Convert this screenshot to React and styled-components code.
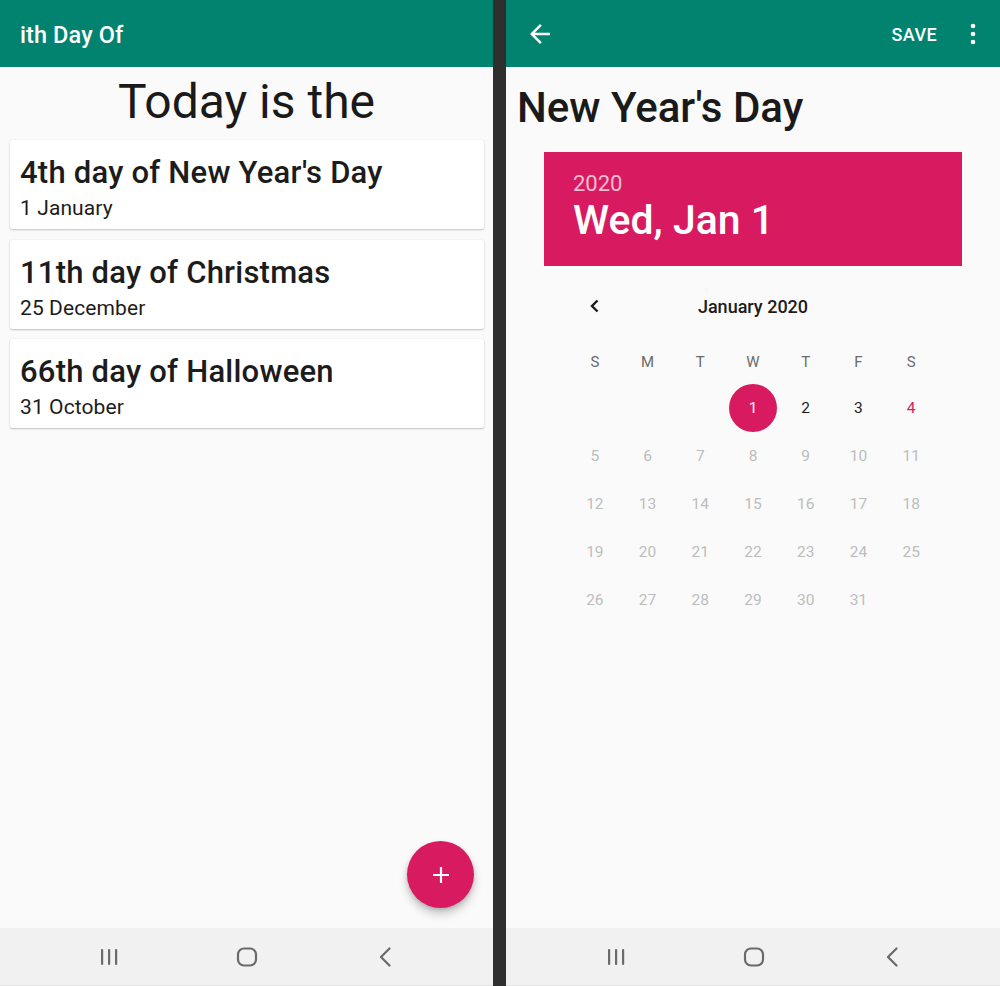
import React from 'react';
import styled, { createGlobalStyle } from 'styled-components';

const GlobalStyle = createGlobalStyle`
  html, body {
    margin: 0;
    padding: 0;
    background: #333;
  }
  body {
    font-family: Roboto, "Noto Sans", Arial, sans-serif;
    -webkit-font-smoothing: antialiased;
  }
  * {
    box-sizing: border-box;
  }
`;

const TEAL = '#01836f';
const PINK = '#d81b60';

const Screens = styled.div`
  display: flex;
  width: 1000px;
  height: 986px;
  background: #333;
`;

const Phone = styled.div`
  width: ${(p) => p.width}px;
  height: 986px;
  display: flex;
  flex-direction: column;
  background: #fafafa;
`;

const Divider = styled.div`
  width: 13px;
  background: #2f2f2f;
`;

const AppBar = styled.header`
  height: 67px;
  flex-shrink: 0;
  background: ${TEAL};
  color: #fff;
  display: flex;
  align-items: center;
  padding: ${(p) => p.pad || '0 20px'};
`;

const AppTitle = styled.h1`
  margin: 0;
  padding-top: 2px;
  font-size: 23.5px;
  font-weight: 500;
  letter-spacing: 0.1px;
`;

const IconButton = styled.button`
  border: none;
  background: none;
  padding: 0;
  color: #fff;
  display: flex;
  align-items: center;
  justify-content: center;
  width: ${(p) => p.size || 30}px;
  height: ${(p) => p.size || 30}px;
`;

const Spacer = styled.div`
  flex: 1;
`;

const SaveButton = styled.button`
  border: none;
  background: none;
  color: #fff;
  font-family: inherit;
  font-size: 18px;
  font-weight: 500;
  letter-spacing: 0.4px;
  padding: 0;
  margin-right: 20px;
  margin-top: 2px;
`;

const Content = styled.main`
  flex: 1;
  position: relative;
  display: flex;
  flex-direction: column;
`;

const Heading = styled.h2`
  margin: 7px 0 10px;
  text-align: center;
  font-size: 48px;
  font-weight: 400;
  color: #1a1a1a;
  line-height: 56px;
`;

const CardList = styled.div`
  display: flex;
  flex-direction: column;
  gap: 10.5px;
  padding: 0 9px 0 10px;
`;

const Card = styled.div`
  background: #fff;
  border-radius: 2px;
  box-shadow: 0 1px 2px rgba(0, 0, 0, 0.22), 0 0 1px rgba(0, 0, 0, 0.12);
  padding: 15px 10px 9px;
`;

const CardTitle = styled.div`
  font-size: 31px;
  font-weight: 500;
  letter-spacing: 0.22px;
  color: #1c1c1c;
  line-height: 35px;
`;

const CardSub = styled.div`
  margin-top: 6px;
  font-size: 21px;
  letter-spacing: 0.1px;
  color: #1c1c1c;
  line-height: 24px;
`;

const Fab = styled.button`
  position: absolute;
  right: 19px;
  bottom: 20px;
  width: 67px;
  height: 67px;
  border-radius: 50%;
  border: none;
  background: ${PINK};
  color: #fff;
  display: flex;
  align-items: center;
  justify-content: center;
  box-shadow: 0 6px 10px rgba(0, 0, 0, 0.2), 0 2px 4px rgba(0, 0, 0, 0.14);
`;

const NavBar = styled.nav`
  height: 58px;
  flex-shrink: 0;
  background: #f1f1f1;
  border-bottom: 1px solid #e2e2e2;
  display: grid;
  grid-template-columns: repeat(3, 138px);
  justify-content: center;
  align-items: center;
  justify-items: center;
  padding-left: ${(p) => p.shift || 0}px;
`;

const EventTitle = styled.h2`
  margin: 16px 0 20px 11px;
  font-size: 42px;
  font-weight: 500;
  color: #1a1a1a;
  line-height: 49px;
`;

const DateHeader = styled.div`
  margin: 0 38px;
  height: 114px;
  background: ${PINK};
  padding: 19px 29px 0;
  color: #fff;
`;

const YearText = styled.div`
  font-size: 22px;
  line-height: 26px;
  color: rgba(255, 255, 255, 0.72);
`;

const DateText = styled.div`
  font-size: 41px;
  font-weight: 500;
  line-height: 49px;
  margin-top: -1px;
`;

const Calendar = styled.div`
  width: 369px;
  margin: 16px auto 0;
`;

const MonthRow = styled.div`
  height: 48px;
  display: grid;
  grid-template-columns: 52.7px 1fr 52.7px;
  align-items: center;
`;

const MonthLabel = styled.div`
  text-align: center;
  font-size: 18px;
  font-weight: 500;
  color: #1c1c1c;
`;

const Arrow = styled.div`
  display: flex;
  justify-content: center;
  color: #1c1c1c;
`;

const WeekRow = styled.div`
  margin-top: 9px;
  height: 45px;
  display: grid;
  grid-template-columns: repeat(7, 1fr);
  align-items: center;
`;

const WeekDay = styled.div`
  text-align: center;
  font-size: 15px;
  color: #6b6b6b;
`;

const DayGrid = styled.div`
  display: grid;
  grid-template-columns: repeat(7, 1fr);
  grid-auto-rows: 48px;
`;

const Day = styled.div`
  display: flex;
  align-items: center;
  justify-content: center;
  font-size: 15.5px;
  color: ${(p) => (p.selected ? '#fff' : p.tone)};
  & > span {
    width: 48px;
    height: 48px;
    border-radius: 50%;
    display: flex;
    align-items: center;
    justify-content: center;
    background: ${(p) => (p.selected ? PINK : 'transparent')};
  }
`;

const holidays = [
  { title: "4th day of New Year's Day", date: '1 January' },
  { title: '11th day of Christmas', date: '25 December' },
  { title: '66th day of Halloween', date: '31 October' },
];

const weekDays = ['S', 'M', 'T', 'W', 'T', 'F', 'S'];

const RecentsIcon = () => (
  <svg width="20" height="18" viewBox="0 0 20 18" fill="#6a6a6a">
    <rect x="2" y="1" width="2.2" height="16" rx="1" />
    <rect x="9" y="1" width="2.2" height="16" rx="1" />
    <rect x="16" y="1" width="2.2" height="16" rx="1" />
  </svg>
);

const HomeIcon = () => (
  <svg width="22" height="20" viewBox="0 0 22 20" fill="none">
    <rect x="2" y="1.5" width="18" height="17" rx="6" stroke="#6a6a6a" strokeWidth="2.2" />
  </svg>
);

const BackIcon = () => (
  <svg width="14" height="20" viewBox="0 0 14 20" fill="none">
    <path d="M11.5 1.5L3 10l8.5 8.5" stroke="#6a6a6a" strokeWidth="2.2" strokeLinecap="round" strokeLinejoin="round" />
  </svg>
);

const SystemNav = ({ shift }) => (
  <NavBar shift={shift}>
    <RecentsIcon />
    <HomeIcon />
    <BackIcon />
  </NavBar>
);

const dayTone = (d) => {
  if (d === 4) return PINK;
  if (d <= 3) return '#1c1c1c';
  return '#bdbdbd';
};

const App = () => {
  // January 2020 starts on a Wednesday
  const cells = [null, null, null];
  for (let d = 1; d <= 31; d++) cells.push(d);

  return (
    <>
      <GlobalStyle />
      <Screens>
        <Phone width={493}>
          <AppBar>
            <AppTitle>ith Day Of</AppTitle>
          </AppBar>
          <Content>
            <Heading>Today is the</Heading>
            <CardList>
              {holidays.map((h) => (
                <Card key={h.title}>
                  <CardTitle>{h.title}</CardTitle>
                  <CardSub>{h.date}</CardSub>
                </Card>
              ))}
            </CardList>
            <Fab>
              <svg width="20" height="20" viewBox="0 0 20 20">
                <path d="M10 2v16M2 10h16" stroke="#fff" strokeWidth="2.2" />
              </svg>
            </Fab>
          </Content>
          <SystemNav shift={0} />
        </Phone>
        <Divider />
        <Phone width={494}>
          <AppBar pad="0 11px 0 19px">
            <IconButton size={30}>
              <svg width="30" height="30" viewBox="0 0 24 24" fill="#fff">
                <path d="M20 11H7.83l5.59-5.59L12 4l-8 8 8 8 1.41-1.41L7.83 13H20v-2z" />
              </svg>
            </IconButton>
            <Spacer />
            <SaveButton>SAVE</SaveButton>
            <IconButton size={32}>
              <svg width="32" height="32" viewBox="0 0 24 24" fill="#fff">
                <circle cx="12" cy="6" r="1.75" />
                <circle cx="12" cy="12" r="1.75" />
                <circle cx="12" cy="18" r="1.75" />
              </svg>
            </IconButton>
          </AppBar>
          <Content>
            <EventTitle>New Year's Day</EventTitle>
            <DateHeader>
              <YearText>2020</YearText>
              <DateText>Wed, Jan 1</DateText>
            </DateHeader>
            <Calendar>
              <MonthRow>
                <Arrow>
                  <svg width="12" height="14" viewBox="0 0 12 14" fill="none">
                    <path d="M8.5 1.5L3 7l5.5 5.5" stroke="#1c1c1c" strokeWidth="2.4" />
                  </svg>
                </Arrow>
                <MonthLabel>January 2020</MonthLabel>
                <div />
              </MonthRow>
              <WeekRow>
                {weekDays.map((w, i) => (
                  <WeekDay key={i}>{w}</WeekDay>
                ))}
              </WeekRow>
              <DayGrid>
                {cells.map((d, i) => (
                  <Day key={i} selected={d === 1} tone={dayTone(d)}>
                    {d && <span>{d}</span>}
                  </Day>
                ))}
              </DayGrid>
            </Calendar>
          </Content>
          <SystemNav shift={2} />
        </Phone>
      </Screens>
    </>
  );
};

export default App;
